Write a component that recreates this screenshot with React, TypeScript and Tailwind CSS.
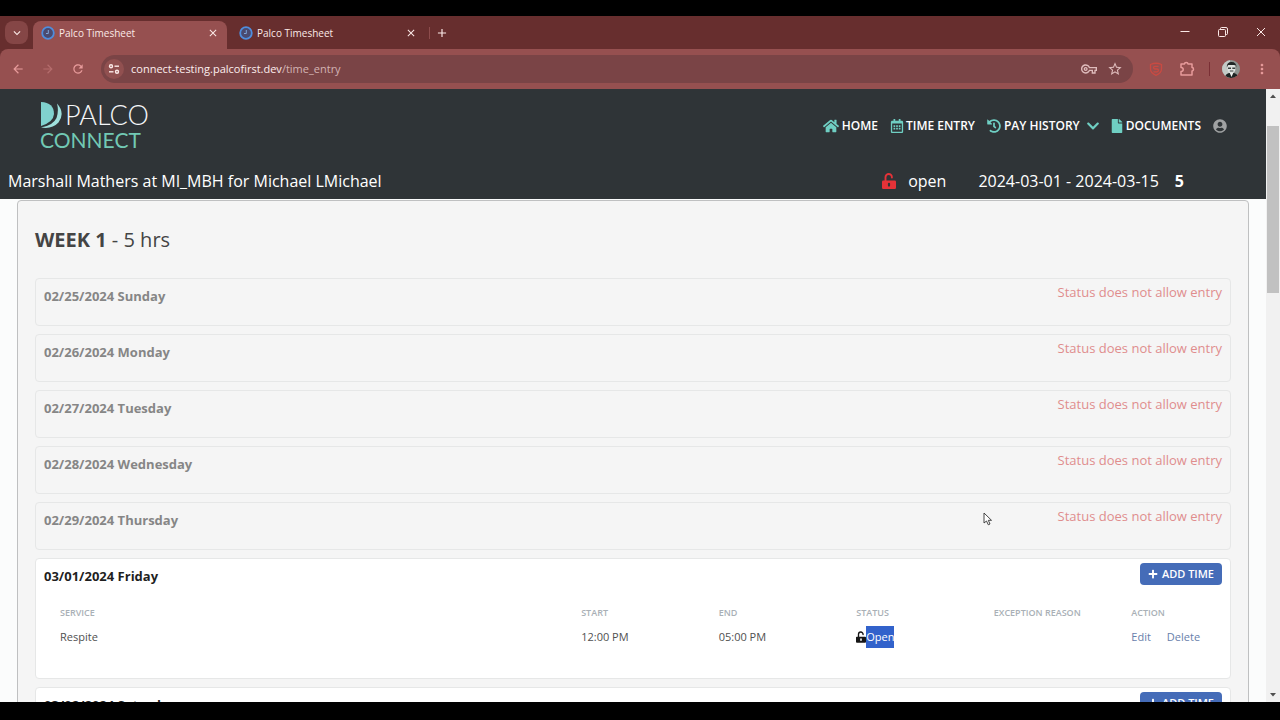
import {
  FaChevronDown,
  FaFile,
  FaHistory,
  FaHome,
  FaPlus,
  FaRegCalendarAlt,
  FaUserCircle,
} from "react-icons/fa";
import {
  MdArrowBack,
  MdArrowForward,
  MdClose,
  MdExpandMore,
  MdMoreVert,
  MdOutlineVpnKey,
  MdRefresh,
  MdStarBorder,
  MdAdd,
} from "react-icons/md";
import clsx from "clsx";

type Entry = {
  service: string;
  start: string;
  end: string;
  status: string;
  reason: string;
};

type Day = {
  date: string;
  weekday: string;
  open: boolean;
  entries: Entry[];
};

const days: Day[] = [
  { date: "02/25/2024", weekday: "Sunday", open: false, entries: [] },
  { date: "02/26/2024", weekday: "Monday", open: false, entries: [] },
  { date: "02/27/2024", weekday: "Tuesday", open: false, entries: [] },
  { date: "02/28/2024", weekday: "Wednesday", open: false, entries: [] },
  { date: "02/29/2024", weekday: "Thursday", open: false, entries: [] },
  {
    date: "03/01/2024",
    weekday: "Friday",
    open: true,
    entries: [
      {
        service: "Respite",
        start: "12:00 PM",
        end: "05:00 PM",
        status: "Open",
        reason: "",
      },
    ],
  },
  { date: "03/02/2024", weekday: "Saturday", open: true, entries: [] },
];

function UnlockIcon({ className }: { className?: string }) {
  return (
    <svg viewBox="0 0 14 16" className={className} aria-hidden="true">
      <path
        d="M3.5 9V4.2a3.2 3.2 0 0 1 6.4 0v.3"
        fill="none"
        stroke="currentColor"
        strokeWidth="1.9"
        strokeLinecap="round"
      />
      <path
        d="M1.2 7.600h11.600A1.200 1.200 0 0 1 14 8.800v6A1.200 1.200 0 0 1 12.800 16H1.200A1.200 1.200 0 0 1 0 14.800v-6A1.200 1.200 0 0 1 1.200 7.600zM7 9.700a1.100 1.100 0 0 0-1.100 1.100v1.800a1.100 1.100 0 0 0 2.200 0v-1.800A1.100 1.100 0 0 0 7 9.700z"
        fill="currentColor"
        fillRule="evenodd"
      />
    </svg>
  );
}

function ClockFavicon() {
  return (
    <svg viewBox="0 0 14 14" className="size-3.5 shrink-0" aria-hidden="true">
      <circle cx="7" cy="7" r="5.8" fill="#4a4a70" stroke="#4f8ddd" strokeWidth="1.8" />
      <path d="M7.300 4v3.500H5" fill="none" stroke="#7ea5da" strokeWidth="1" />
    </svg>
  );
}

function Tab({ title, active }: { title: string; active?: boolean }) {
  return (
    <div
      className={clsx(
        "flex h-7 w-[194px] items-center px-2 pb-1 text-[10px] text-[#fbe9e7]",
        active && "rounded-t-lg bg-[#965050]"
      )}
    >
      <ClockFavicon />
      <span className="ml-1 flex-1">{title}</span>
      <button type="button" aria-label={"Close " + title}>
        <MdClose className="size-3" />
      </button>
    </div>
  );
}

function BrowserChrome() {
  return (
    <div className="shrink-0 bg-[#672e2e] font-['Open_Sans',sans-serif] text-[#fbe9e7]">
      <div className="flex h-[33px] items-end">
        <button
          type="button"
          aria-label="Search tabs"
          className="mb-[5px] ml-[5px] flex size-[23px] items-center justify-center rounded-lg bg-[#854646]"
        >
          <MdExpandMore className="size-3.5" />
        </button>
        <div className="ml-[5px] flex">
          <Tab title="Palco Timesheet" active />
          <div className="ml-1">
            <Tab title="Palco Timesheet" />
          </div>
        </div>
        <span className="mb-2.5 ml-1 h-3 w-px bg-[#8d4c4c]" />
        <button type="button" aria-label="New tab" className="mb-[9px] ml-[5px]">
          <MdAdd className="size-3.5" />
        </button>
        <div className="mr-3.5 mb-3 ml-auto flex items-center gap-7">
          <button type="button" aria-label="Minimize">
            <svg viewBox="0 0 10 10" className="size-2.5" aria-hidden="true">
              <path d="M0.500 4.500h9" stroke="currentColor" />
            </svg>
          </button>
          <button type="button" aria-label="Restore">
            <svg viewBox="0 0 10 10" className="size-2.5" fill="none" stroke="currentColor" aria-hidden="true">
              <rect x="0.500" y="2.500" width="7" height="7" rx="1" />
              <path d="M2.500 2.500v-1q0-1 1-1h4.500q1.500 0 1.500 1.500v4.500q0 1-1 1h-1" />
            </svg>
          </button>
          <button type="button" aria-label="Close">
            <svg viewBox="0 0 10 10" className="size-2.5" aria-hidden="true">
              <path d="M1 1l8 8M9 1l-8 8" stroke="currentColor" />
            </svg>
          </button>
        </div>
      </div>

      <div className="flex h-10 items-center rounded-t-lg bg-[#965050] pr-2.5 pl-[11px] text-[#e89b9b]">
        <button type="button" aria-label="Back">
          <MdArrowBack className="size-3.5" />
        </button>
        <button type="button" aria-label="Forward" className="ml-4 text-[#b56d6d]">
          <MdArrowForward className="size-3.5" />
        </button>
        <button type="button" aria-label="Reload" className="ml-4">
          <MdRefresh className="size-3.5" />
        </button>
        <div className="ml-4 flex h-7 flex-1 items-center rounded-full bg-[#7a4446] pr-2.5 pl-[3px]">
          <button
            type="button"
            aria-label="View site information"
            className="flex size-5 items-center justify-center rounded-full bg-[#915050] text-[#fbe9e7]"
          >
            <svg viewBox="0 0 12 12" className="size-3" fill="none" stroke="currentColor" strokeWidth="1.400" aria-hidden="true">
              <circle cx="3" cy="3.200" r="1.500" />
              <path d="M6.500 3.200H11" />
              <circle cx="9" cy="8.800" r="1.500" />
              <path d="M1 8.800h4.500" />
            </svg>
          </button>
          <span className="ml-[7px] flex-1 text-[11px] text-[#d3b3b3]">
            <span className="text-[#fdeeee]">connect-testing.palcofirst.dev</span>
            /time_entry
          </span>
          <button type="button" aria-label="Passwords" className="text-[#dfbcbc]">
            <MdOutlineVpnKey className="size-4" />
          </button>
          <button type="button" aria-label="Bookmark" className="ml-2.5 text-[#dfbcbc]">
            <MdStarBorder className="size-4" />
          </button>
        </div>
        <button type="button" aria-label="Extension" className="ml-4 text-[#c94a42]">
          <svg viewBox="0 0 14 14" className="size-3.5" fill="none" stroke="currentColor" aria-hidden="true">
            <path d="M1.500 2.500Q7 0 12.500 2.500V7q0 4-5.500 6.300Q1.500 11 1.500 7z" strokeWidth="1.300" />
            <path d="M9.500 4.300H6Q4.500 4.300 4.500 5.600T6 7h2q1.500 0 1.500 1.300T8 9.800H4.500" strokeWidth="1.300" />
          </svg>
        </button>
        <button type="button" aria-label="Extensions" className="ml-4">
          <svg viewBox="0 0 16 16" className="size-4" fill="none" stroke="currentColor" strokeWidth="1.500" strokeLinejoin="round" aria-hidden="true">
            <path d="M2 3h3.500q0-1.500 1.700-1.500T9 3h4v3.500q1.500 0 1.500 1.700T13 10v4H2v-3.500q2.200 0 2.200-2T2 6.500z" />
          </svg>
        </button>
        <span className="ml-3.5 h-3.5 w-px bg-[#7a2f35]" />
        <button type="button" aria-label="Profile" className="ml-3">
          <svg viewBox="0 0 18 18" className="size-[18px] rounded-full" aria-hidden="true">
            <rect width="18" height="18" fill="#8e9490" />
            <path d="M0 0h8v18H0z" fill="#c4cac6" />
            <path d="M3 18q0-4 4-5h5q4 1 4 5z" fill="#1d2322" />
            <path d="M7.500 12.500h4L9.500 17z" fill="#f1f4f2" />
            <ellipse cx="9.500" cy="8.500" rx="4" ry="5" fill="#dfe4e1" />
            <path d="M4.800 7.500Q4.500 2 9.500 2t5 5.500l-1-2.500H6z" fill="#202625" />
            <path d="M6 7.500h3v1.500H6zM10.300 7.500h3v1.500h-3z" fill="#39403e" />
            <path d="M7.800 11h3.600" stroke="#39403e" />
          </svg>
        </button>
        <button type="button" aria-label="Menu" className="ml-3.5">
          <MdMoreVert className="size-4" />
        </button>
      </div>
    </div>
  );
}

function Logo() {
  return (
    <a href="#home" className="flex flex-col font-['Lato',sans-serif]">
      <span className="flex items-center">
        <svg viewBox="0 0 25 28" className="h-7 w-[25px]" aria-hidden="true">
          <path d="M1 1Q14 1.500 14 13 13.500 21 1 25z" fill="#80d2ce" />
          <path
            d="M17 2.500Q25.500 12 18.500 21.500 12 28.500 1 26.500 13 24.500 16.500 17 19 10 17 2.500z"
            fill="#9fe0dc"
          />
        </svg>
        <span className="text-[27px] leading-7 font-light text-[#f4f6f7]">PALCO</span>
      </span>
      <span className="text-[21px] leading-[22px] text-[#72c9b4]">CONNECT</span>
    </a>
  );
}

function SiteHeader() {
  return (
    <header className="shrink-0 bg-[#2f3437] text-white">
      <div className="flex h-[74px] items-center justify-between pr-[39px] pl-10">
        <Logo />
        <nav className="flex items-center gap-3 text-xs font-semibold">
          <a href="#home" className="flex items-center gap-[3px]">
            <FaHome className="size-4 text-[#6fcfc3]" />
            HOME
          </a>
          <a href="#time" className="flex items-center gap-0.5">
            <FaRegCalendarAlt className="size-3.5 text-[#6fcfc3]" />
            TIME ENTRY
          </a>
          <a href="#history" className="flex items-center gap-[3px]">
            <FaHistory className="size-3.5 text-[#6fcfc3]" />
            PAY HISTORY
            <FaChevronDown className="ml-[3px] size-3.5 text-[#6fcfc3]" />
          </a>
          <a href="#documents" className="-ml-0.5 flex items-center gap-0.5">
            <FaFile className="size-3.5 text-[#6fcfc3]" />
            DOCUMENTS
          </a>
          <a href="#account" aria-label="Account">
            <FaUserCircle className="size-3.5 text-[#a0a2a3]" />
          </a>
        </nav>
      </div>
      <div className="flex h-9 items-center pr-[82px] pl-2 text-base">
        <h1 className="flex-1">Marshall Mathers at MI_MBH for Michael LMichael</h1>
        <UnlockIcon className="h-4 w-3.5 text-[#e53238]" />
        <span className="ml-3">open</span>
        <span className="ml-8">2024-03-01 - 2024-03-15</span>
        <strong className="ml-4">5</strong>
      </div>
    </header>
  );
}

function EntryTable({ entries }: { entries: Entry[] }) {
  return (
    <table className="mt-4 w-full table-fixed text-left text-[11px] text-[#505050]">
      <thead className="text-[9px] text-[#a9b0b6]">
        <tr className="h-6">
          <th className="w-[45.6%] pl-4 font-semibold">SERVICE</th>
          <th className="font-semibold">START</th>
          <th className="font-semibold">END</th>
          <th className="font-semibold">STATUS</th>
          <th className="font-semibold">EXCEPTION REASON</th>
          <th className="w-[7.7%] font-semibold">ACTION</th>
        </tr>
      </thead>
      <tbody>
        {entries.map((entry) => (
          <tr key={entry.start} className="h-6">
            <td className="pl-4">{entry.service}</td>
            <td>{entry.start}</td>
            <td>{entry.end}</td>
            <td>
              <span className="flex items-center">
                <UnlockIcon className="h-3 w-2.5 text-[#161616]" />
                <span className="bg-[#3262cb] leading-[22px] text-white">{entry.status}</span>
              </span>
            </td>
            <td>{entry.reason}</td>
            <td>
              <span className="flex gap-4 text-[#6880ab]">
                <a href="#edit">Edit</a>
                <a href="#delete">Delete</a>
              </span>
            </td>
          </tr>
        ))}
      </tbody>
    </table>
  );
}

function DayCard({ day }: { day: Day }) {
  return (
    <section
      className={clsx(
        "rounded border border-[#e6e7e7] px-2 pt-1",
        day.open ? "min-h-[121px] bg-white" : "min-h-12"
      )}
    >
      <div className="flex items-start justify-between">
        <h3
          className={clsx(
            "pt-1 text-[13px] leading-[18px] font-bold",
            day.open ? "text-[#1f1f1f]" : "text-[#868686]"
          )}
        >
          {day.date} {day.weekday}
        </h3>
        {day.open ? (
          <button
            type="button"
            className="flex h-[22px] items-center gap-1 rounded-sm bg-[#456cb8] px-2 text-[11px] font-semibold text-white"
          >
            <FaPlus className="size-2.5" />
            ADD TIME
          </button>
        ) : (
          <p className="text-[13px] leading-[18px] text-[#e08d8d]">Status does not allow entry</p>
        )}
      </div>
      {day.entries.length > 0 && <EntryTable entries={day.entries} />}
    </section>
  );
}

function Scrollbar() {
  return (
    <div className="flex w-3.5 shrink-0 flex-col items-center bg-[#f1f1f1]" aria-hidden="true">
      <svg viewBox="0 0 14 14" className="size-3.5 shrink-0">
        <path d="M4 9h6L7 5.500z" fill="#505050" />
      </svg>
      <div className="mt-[23px] h-[27.3%] w-3 bg-[#c1c1c1]" />
      <svg viewBox="0 0 14 14" className="mt-auto size-3.5 shrink-0">
        <path d="M4 5h6L7 8.500z" fill="#505050" />
      </svg>
    </div>
  );
}

export default function App() {
  return (
    <div className="relative flex h-screen flex-col overflow-hidden bg-black pt-4 pb-[18px]">
      <BrowserChrome />
      <div className="flex min-h-0 flex-1 font-['Open_Sans',sans-serif]">
        <div className="flex min-w-0 flex-1 flex-col bg-[#fbfcfc]">
          <SiteHeader />
          <main className="min-h-0 flex-1 overflow-hidden px-[17px] pt-px">
            <div className="rounded-t border border-[#bfc0c1] bg-[#f5f5f5] px-[17px] pb-4">
              <h2 className="pt-6 pb-6 text-xl leading-[29px] text-[#444]">
                <strong>WEEK 1</strong> - 5 hrs
              </h2>
              <div className="flex flex-col gap-2">
                {days.map((day) => (
                  <DayCard key={day.date} day={day} />
                ))}
              </div>
            </div>
          </main>
        </div>
        <Scrollbar />
      </div>
      {/* mouse pointer */}
      <svg viewBox="0 0 10 14" className="absolute top-[512px] left-[983px] h-3.5 w-2.5" aria-hidden="true">
        <path
          d="M1 1v10l2.500-2 1.800 3.800 1.700-.8L5.300 8.300H8.500z"
          fill="#fff"
          stroke="#333"
          strokeWidth="0.900"
        />
      </svg>
    </div>
  );
}
